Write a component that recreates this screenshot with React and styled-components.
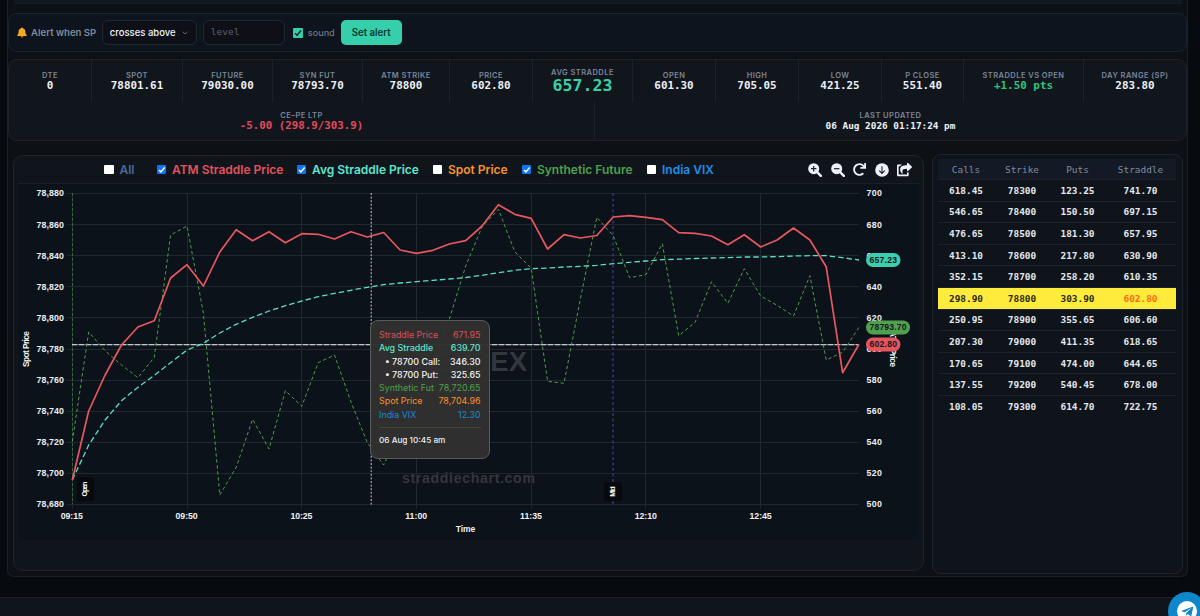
import React from "react";
import styled, { createGlobalStyle } from "styled-components";
import { FaRedo, FaShareSquare, FaTelegramPlane } from "react-icons/fa";
import { FiChevronDown } from "react-icons/fi";

const GlobalStyle = createGlobalStyle`
  * {
    box-sizing: border-box;
  }
  body {
    margin: 0;
    background: #070a0f;
    color: #e8edf4;
    font-family: Inter, sans-serif;
    overflow: hidden;
  }
`;

const mono = `"DejaVu Sans Mono", monospace`;

const Page = styled.div`
  width: 1200px;
  height: 616px;
  display: flex;
  flex-direction: column;
  overflow: hidden;
`;

const Shell = styled.main`
  width: 1181px;
  height: 577px;
  margin-left: 7px;
  border: 1px solid #1b2028;
  border-top: 0;
  border-radius: 0 0 7px 7px;
  background: #0d1015;
  display: flex;
  flex-direction: column;
`;

const TopStrip = styled.div`
  height: 4px;
  margin: 0 5px 9px 6px;
  background: #111823;
  border-bottom: 1px solid #171d27;
`;

const AlertBar = styled.section`
  height: 39px;
  flex: none;
  display: flex;
  align-items: center;
  padding: 0 8px;
  border: 1px solid #182331;
  border-radius: 8px;
  background: #0d141d;
`;

const AlertLabel = styled.span`
  margin: 0 5.5px 0 4px;
  font-size: 9.6px;
  font-weight: 600;
  color: #7f8b9c;
`;

const Select = styled.div`
  width: 95px;
  height: 25px;
  display: flex;
  align-items: center;
  justify-content: space-between;
  padding: 0 7px;
  border: 1px solid #222832;
  border-radius: 6px;
  background: #0d1117;
  font-size: 9.5px;
  font-weight: 500;
  color: #eef2f7;
  white-space: nowrap;

  svg {
    color: #8b95a3;
  }
`;

const LevelInput = styled.div`
  width: 82px;
  height: 25px;
  margin-left: 6px;
  padding: 0 7px;
  border: 1px solid #222832;
  border-radius: 6px;
  background: #0d1117;
  font: 9.5px/22px ${mono};
  color: #59616d;
`;

const SoundLabel = styled.label`
  display: flex;
  align-items: center;
  gap: 5px;
  margin: 0 6px 0 8px;
  font-size: 9.1px;
  font-weight: 500;
  color: #6c7888;
`;

const AlertButton = styled.button`
  width: 61px;
  height: 25px;
  padding: 0;
  border: 0;
  border-radius: 5px;
  background: #35d0ab;
  color: #07382d;
  font: 600 9.7px Inter, sans-serif;
`;

const StatsCard = styled.section`
  height: 82px;
  flex: none;
  margin-top: 7px;
  border: 1px solid #1d232c;
  border-radius: 9px;
  background: #11161d;
`;

const StatsRow = styled.div`
  display: grid;
  grid-template-columns: ${(props) => props.$columns};
  height: ${(props) => props.$height}px;
`;

const Stat = styled.div`
  display: flex;
  flex-direction: column;
  align-items: center;
  justify-content: center;
  padding-top: ${(props) => props.$drop || 0}px;
  border-right: 1px solid #1c222b;
  white-space: nowrap;

  &:last-child {
    border-right: 0;
  }
`;

const StatLabel = styled.span`
  font-size: 7.5px;
  font-weight: 600;
  line-height: 9px;
  letter-spacing: 0.45px;
  color: #7b8699;
`;

const StatValue = styled.span`
  font-family: ${mono};
  font-size: ${(props) => props.$size || 10.9}px;
  font-weight: 700;
  line-height: ${(props) => (props.$size > 14 ? 17 : 12)}px;
  color: ${(props) => props.$color || "#edf1f6"};
`;

const Columns = styled.div`
  display: flex;
  align-items: flex-start;
  gap: 8px;
  padding: 13px 4px 0 5px;
`;

const ChartCard = styled.section`
  position: relative;
  width: 911px;
  height: 416px;
  margin-top: 1px;
  padding: 0 4px;
  border: 1px solid #1d242e;
  border-radius: 10px;
  background: #10151c;
`;

const ChartHeader = styled.div`
  height: 28px;
  display: flex;
  align-items: center;
  justify-content: space-between;
  padding: 0 7px 0 86px;
  border-bottom: 1px solid #1a2028;
`;

const Legend = styled.div`
  display: grid;
  grid-template-columns: 52.5px 140px 136px 89px 125px 70px;
`;

const LegendItem = styled.label`
  display: flex;
  align-items: center;
  gap: 6px;
  color: ${(props) => props.$color};
  font-size: 12px;
  font-weight: 600;
  white-space: nowrap;
`;

const Box = styled.span`
  display: inline-flex;
  flex: none;
  width: ${(props) => props.$size}px;
  height: ${(props) => props.$size}px;
  border-radius: 1px;
  background: ${(props) => (props.$on ? props.$fill || "#0d75f5" : "#ffffff")};
`;

const Tools = styled.div`
  display: flex;
  align-items: center;
  gap: 8.5px;
  color: #eef2f8;
`;

const ChartArea = styled.div`
  width: 901px;
  height: 356px;
  background: #0c121a;

  svg {
    display: block;
  }
`;

const Tooltip = styled.div`
  position: absolute;
  left: 356px;
  top: 164px;
  width: 120px;
  height: 139px;
  padding: 7px 8.5px 0 8px;
  border: 1px solid #5a5a5a;
  border-radius: 8px;
  background: rgba(49, 49, 49, 0.97);
  font-size: 8.9px;
  line-height: 13.3px;
`;

const TipRow = styled.div`
  display: flex;
  justify-content: space-between;
  padding-left: ${(props) => (props.$nested ? 6 : 0)}px;
  color: ${(props) => props.$color};
  font-weight: ${(props) => (props.$strong ? 500 : 400)};
  white-space: nowrap;
`;

const TipTime = styled.div`
  margin-top: 6px;
  padding-top: 6px;
  border-top: 1px solid #49443b;
  font-size: 8.2px;
  font-weight: 500;
  color: #eeeeee;
`;

const ChainCard = styled.section`
  width: 252px;
  height: 420px;
  padding: 4px 6px 0 5px;
  border: 1px solid #1d242e;
  border-radius: 9px;
  background: #0f141b;
`;

const ChainRow = styled.div`
  display: grid;
  grid-template-columns: 56px 56px 55px 71px;
  align-items: center;
  height: ${(props) => (props.$head ? 21 : 21.6)}px;
  border-bottom: 1px solid #1c222a;
  background: ${(props) => (props.$head ? "#131a25" : props.$active ? "#ffeb3b" : "transparent")};
  font-family: ${mono};
  font-size: 9.45px;
  font-weight: ${(props) => (props.$head ? 400 : 700)};
  color: ${(props) => (props.$head ? "#808b9b" : props.$active ? "#2c2a12" : "#e3e7ec")};
  text-align: center;

  &:last-child {
    border-bottom: 0;
  }

  span:last-child {
    color: ${(props) => props.$active && "#ff6b1a"};
  }
`;

const Footer = styled.footer`
  height: 19px;
  margin-top: 20px;
  border-top: 1px solid #1d2128;
  background: #10141b;
`;

const TelegramButton = styled.a`
  position: absolute;
  left: 1168px;
  top: 592px;
  width: 38px;
  height: 38px;
  border-radius: 50%;
  background: #0e86cc;
  display: flex;
  align-items: center;
  justify-content: center;

  span {
    width: 20px;
    height: 20px;
    border-radius: 50%;
    background: #ffffff;
    color: #0e86cc;
    display: flex;
    align-items: center;
    justify-content: center;
  }
`;

const TelegramClip = styled.div`
  position: absolute;
  left: 0;
  top: 0;
  width: 1200px;
  height: 616px;
  overflow: hidden;
  pointer-events: none;
`;

const stats = [
  ["DTE", "0"],
  ["SPOT", "78801.61"],
  ["FUTURE", "79030.00"],
  ["SYN FUT", "78793.70"],
  ["ATM STRIKE", "78800"],
  ["PRICE", "602.80"],
  ["AVG STRADDLE", "657.23", "#3bcfa9", 16.6],
  ["OPEN", "601.30"],
  ["HIGH", "705.05"],
  ["LOW", "421.25"],
  ["P CLOSE", "551.40"],
  ["STRADDLE VS OPEN", "+1.50 pts", "#2fc47e"],
  ["DAY RANGE (SP)", "283.80"],
];

const legend = [
  ["All", "#4b6b9b", false],
  ["ATM Straddle Price", "#e4525c", true],
  ["Avg Straddle Price", "#5ce6cd", true],
  ["Spot Price", "#f8922c", false],
  ["Synthetic Future", "#4ea04b", true],
  ["India VIX", "#1e90e8", false],
];

const chain = [
  ["618.45", "78300", "123.25", "741.70"],
  ["546.65", "78400", "150.50", "697.15"],
  ["476.65", "78500", "181.30", "657.95"],
  ["413.10", "78600", "217.80", "630.90"],
  ["352.15", "78700", "258.20", "610.35"],
  ["298.90", "78800", "303.90", "602.80"],
  ["250.95", "78900", "355.65", "606.60"],
  ["207.30", "79000", "411.35", "618.65"],
  ["170.65", "79100", "474.00", "644.65"],
  ["137.55", "79200", "540.45", "678.00"],
  ["108.05", "79300", "614.70", "722.75"],
];

const tips = [
  ["Straddle Price", "671.95", "#dc5059"],
  ["Avg Straddle", "639.70", "#5ce6cd", true],
  ["• 78700 Call:", "346.30", "#f2f2f2", true, true],
  ["• 78700 Put:", "325.65", "#f2f2f2", true, true],
  ["Synthetic Fut", "78,720.65", "#4ea04b"],
  ["Spot Price", "78,704.96", "#f8922c"],
  ["India VIX", "12.30", "#168bd6"],
];

// one value per five minutes, 09:15 to 13:15
const straddle = [
  480, 411, 375, 345, 327, 320.7, 278, 264.7, 286, 252, 229.7, 240.7, 231.7, 242.7, 233.7, 234.3, 239,
  231.7, 237, 232.5, 250, 253.3, 250.3, 244, 240.7, 226, 204.7, 214.3, 218.3, 249, 234.7, 238, 235.5,
  217, 215.7, 217.3, 219.7, 232.7, 233.3, 236, 244.7, 234.7, 247, 240, 228, 240, 266.7, 372.7, 344.3,
];
const average = [
  480, 445, 420, 400.7, 387.3, 375.3, 362.7, 350, 343.3, 333, 324.3, 317.3, 311, 305.7, 301, 296.7,
  293.3, 290.3, 287.3, 284.7, 283, 281.7, 280.3, 279, 277.5, 275.3, 272.7, 270.3, 268.7, 268, 267,
  266.3, 265.3, 263.7, 262.3, 261, 259.7, 259.2, 258.5, 258, 257.6, 257, 257, 256.6, 256, 255.7,
  255.7, 257.7, 260,
];
const synthetic = [
  441.7, 332, 350.7, 365, 377.7, 357.3, 235, 226, 313, 495, 467.3, 419.3, 449, 390.7, 406.3, 362.7,
  355, 401.7, 442.7, 465, 430, 400, 365, 319.3, 266, 226.7, 209.3, 251.7, 268.3, 381.3, 383.3, 299,
  217.3, 235.7, 277.7, 274.7, 243.7, 335.7, 322.3, 281.7, 303.3, 268.7, 296, 305.3, 316, 275.7, 360,
  352.3, 327.3,
];

const LEFT = 72.3;
const STEP = 16.39;
const toPoints = (ys) => ys.map((y, i) => `${(LEFT + i * STEP).toFixed(1)},${y}`).join(" ");
const rows = Array.from({ length: 11 }, (_, i) => 193.5 + i * 31.1);
const times = ["09:15", "09:50", "10:25", "11:00", "11:35", "12:10", "12:45"];

const Check = ({ on, fill, stroke = "#ffffff", size = 9.5 }) => (
  <Box $on={on} $fill={fill} $size={size}>
    {on && (
      <svg width={size} height={size} viewBox="0 0 9 9" fill="none" stroke={stroke} strokeWidth="1.4">
        <path d="M1.8 4.7 3.7 6.5 7.3 2.3" />
      </svg>
    )}
  </Box>
);

const Bell = () => (
  <svg width="10" height="11" viewBox="0 0 10 11">
    <path
      d="M5 .4a.9.9 0 0 1 .9.9C7.6 1.8 8.4 3 8.4 4.8c0 1.8.5 2.5 1.3 3.3v.8H.3v-.8c.8-.8 1.3-1.5 1.3-3.3C1.6 3 2.4 1.8 4.1 1.3A.9.9 0 0 1 5 .4Z"
      fill="#fba823"
    />
    <path d="M3.6 9.2h2.8a1.4 1.4 0 0 1-2.8 0Z" fill="#d97f16" />
  </svg>
);

const Magnifier = ({ plus }) => (
  <svg width="14" height="14" viewBox="0 0 14 14">
    <circle cx="5.7" cy="5.7" r="5.5" fill="currentColor" />
    <path d="m9.4 9.4 3.4 3.4" stroke="currentColor" strokeWidth="2.4" strokeLinecap="round" />
    <path d={plus ? "M3 5.7h5.4M5.7 3v5.4" : "M3 5.7h5.4"} stroke="#1b2129" strokeWidth="1.2" />
  </svg>
);

const DownloadDot = () => (
  <svg width="14" height="14" viewBox="0 0 14 14">
    <circle cx="7" cy="7" r="6.8" fill="currentColor" />
    <path d="M7 3.3v7M4.2 7.6 7 10.4l2.8-2.8" fill="none" stroke="#1b2129" strokeWidth="1.1" />
  </svg>
);

const AxisPill = ({ y, width, fill, text }) => (
  <g>
    <rect x="866" y={y - 7} width={width} height="14" rx="7" fill={fill} />
    <text x={866 + width / 2} y={y + 2.7} fontSize="8.6" fill="#14191d" textAnchor="middle" textLength={width - 7}>
      {text}
    </text>
  </g>
);

const PriceChart = () => (
  <svg
    width="901"
    height="356"
    viewBox="18 184 901 356"
    fontFamily="Liberation Sans, sans-serif"
    fontWeight="700"
    fill="none"
  >
    <text x="527" y="370.5" fontSize="27.5" textAnchor="end" fill="#32373e">
      SENSEX
    </text>
    <text x="468.5" y="482.5" fontSize="14.2" textAnchor="middle" textLength="133" fill="#32373e">
      straddlechart.com
    </text>
    <g stroke="#20282e" strokeWidth="1">
      {rows.map((y) => (
        <line key={y} x1="67" x2="859" y1={Math.floor(y) + 0.5} y2={Math.floor(y) + 0.5} />
      ))}
      {times.map((t, i) => (
        <line key={t} x1={Math.floor(LEFT + i * 114.7) + 0.5} x2={Math.floor(LEFT + i * 114.7) + 0.5} y1="193" y2="509" />
      ))}
    </g>
    <g fill="#eceff3" fontSize="8.8">
      {rows.map((y, i) => (
        <text key={y} x="64" y={y + 2.9} textAnchor="end" textLength="27.5">
          {`78,${880 - i * 20}`}
        </text>
      ))}
      {rows.map((y, i) => (
        <text key={y} x="866.5" y={y + 2.9} textLength="15.5">
          {700 - i * 20}
        </text>
      ))}
      {times.map((t, i) => (
        <text key={t} x={LEFT - 0.5 + i * 114.8} y="518.6" textAnchor="middle" textLength="22">
          {t}
        </text>
      ))}
      <text x="465.5" y="532" fontSize="8.5" textAnchor="middle">
        Time
      </text>
      <text transform="translate(28.7 349) rotate(-90)" fontSize="8.3" textAnchor="middle" textLength="36">
        Spot Price
      </text>
      <text transform="translate(889.5 349) rotate(90)" fontSize="8.3" textAnchor="middle" textLength="36">
        ATM Price
      </text>
    </g>
    <line x1="72.5" x2="72.5" y1="193" y2="504" stroke="#2f6937" strokeDasharray="3 2" />
    <line x1="613" x2="613" y1="193" y2="504" stroke="#4643a0" strokeDasharray="3 2.5" />
    <line x1="72" x2="859" y1="344.7" y2="344.7" stroke="#8d9297" />
    <line x1="72" x2="859" y1="344.7" y2="344.7" stroke="#d5d8da" strokeDasharray="5 2" />
    <polyline points={toPoints(synthetic)} stroke="#4f9b4d" strokeWidth="1" strokeDasharray="3.4 2.6" />
    <polyline points={toPoints(average)} stroke="#58dfc6" strokeWidth="1.3" strokeDasharray="5.5 3" />
    <polyline points={toPoints(straddle)} stroke="#e8575f" strokeWidth="1.7" strokeLinejoin="round" />
    <line x1="371.2" x2="371.2" y1="193" y2="505" stroke="#c6c9cc" strokeDasharray="2 1.6" />
    <rect x="77" y="477" width="17" height="24" rx="3" fill="#07090c" />
    <text transform="translate(87.3 489) rotate(-90)" fontSize="7.2" fill="#ffffff" textAnchor="middle" textLength="15">
      Open
    </text>
    <rect x="604" y="482" width="18" height="19" rx="3" fill="#07090c" />
    <text transform="translate(615.2 491.5) rotate(-90)" fontSize="7.2" fill="#ffffff" textAnchor="middle" textLength="10.5">
      Mid
    </text>
    <AxisPill y={260} width={34.5} fill="#3bcfb0" text="657.23" />
    <AxisPill y={327.5} width={44} fill="#50a14f" text="78793.70" />
    <AxisPill y={344.5} width={34.5} fill="#e4555d" text="602.80" />
  </svg>
);

const App = () => {
  return (
    <Page>
      <GlobalStyle />
      <Shell>
        <TopStrip />
        <AlertBar>
          <Bell />
          <AlertLabel>Alert when SP</AlertLabel>
          <Select>
            crosses above
            <FiChevronDown size={8} />
          </Select>
          <LevelInput>level</LevelInput>
          <SoundLabel>
            <Check on fill="#35d0ab" stroke="#10241f" size={10} />
            sound
          </SoundLabel>
          <AlertButton>Set alert</AlertButton>
        </AlertBar>
        <StatsCard>
          <StatsRow $height={42} $columns="83px 91px 90px 90px 87px 83px 100px 83px 83px 83px 82px 120px 1fr">
            {stats.map(([label, value, color, size]) => (
              <Stat key={label} $drop={size ? 0 : 1}>
                <StatLabel>{label}</StatLabel>
                <StatValue $color={color} $size={size}>
                  {value}
                </StatValue>
              </Stat>
            ))}
          </StatsRow>
          <StatsRow $height={37} $columns="586px 1fr">
            <Stat $drop={2}>
              <StatLabel>CE–PE LTP</StatLabel>
              <StatValue $color="#e34a5c" $size={10.8}>
                -5.00 (298.9/303.9)
              </StatValue>
            </Stat>
            <Stat $drop={2}>
              <StatLabel>LAST UPDATED</StatLabel>
              <StatValue $size={9.4}>06 Aug 2026 01:17:24 pm</StatValue>
            </Stat>
          </StatsRow>
        </StatsCard>
        <Columns>
          <ChartCard>
            <ChartHeader>
              <Legend>
                {legend.map(([name, color, on]) => (
                  <LegendItem key={name} $color={color}>
                    <Check on={on} />
                    {name}
                  </LegendItem>
                ))}
              </Legend>
              <Tools>
                <Magnifier plus />
                <Magnifier />
                <FaRedo size={13} />
                <DownloadDot />
                <FaShareSquare size={15} />
              </Tools>
            </ChartHeader>
            <ChartArea>
              <PriceChart />
            </ChartArea>
            <Tooltip>
              {tips.map(([name, value, color, strong, nested]) => (
                <TipRow key={name} $color={color} $strong={strong} $nested={nested}>
                  <span>{name}</span>
                  <span>{value}</span>
                </TipRow>
              ))}
              <TipTime>06 Aug 10:45 am</TipTime>
            </Tooltip>
          </ChartCard>
          <ChainCard>
            <ChainRow $head>
              <span>Calls</span>
              <span>Strike</span>
              <span>Puts</span>
              <span>Straddle</span>
            </ChainRow>
            {chain.map((row) => (
              <ChainRow key={row[1]} $active={row[1] === "78800"}>
                {row.map((cell) => (
                  <span key={cell}>{cell}</span>
                ))}
              </ChainRow>
            ))}
          </ChainCard>
        </Columns>
      </Shell>
      <Footer />
      <TelegramClip>
        <TelegramButton>
          <span>
            <FaTelegramPlane size={13} />
          </span>
        </TelegramButton>
      </TelegramClip>
    </Page>
  );
};

export default App;
